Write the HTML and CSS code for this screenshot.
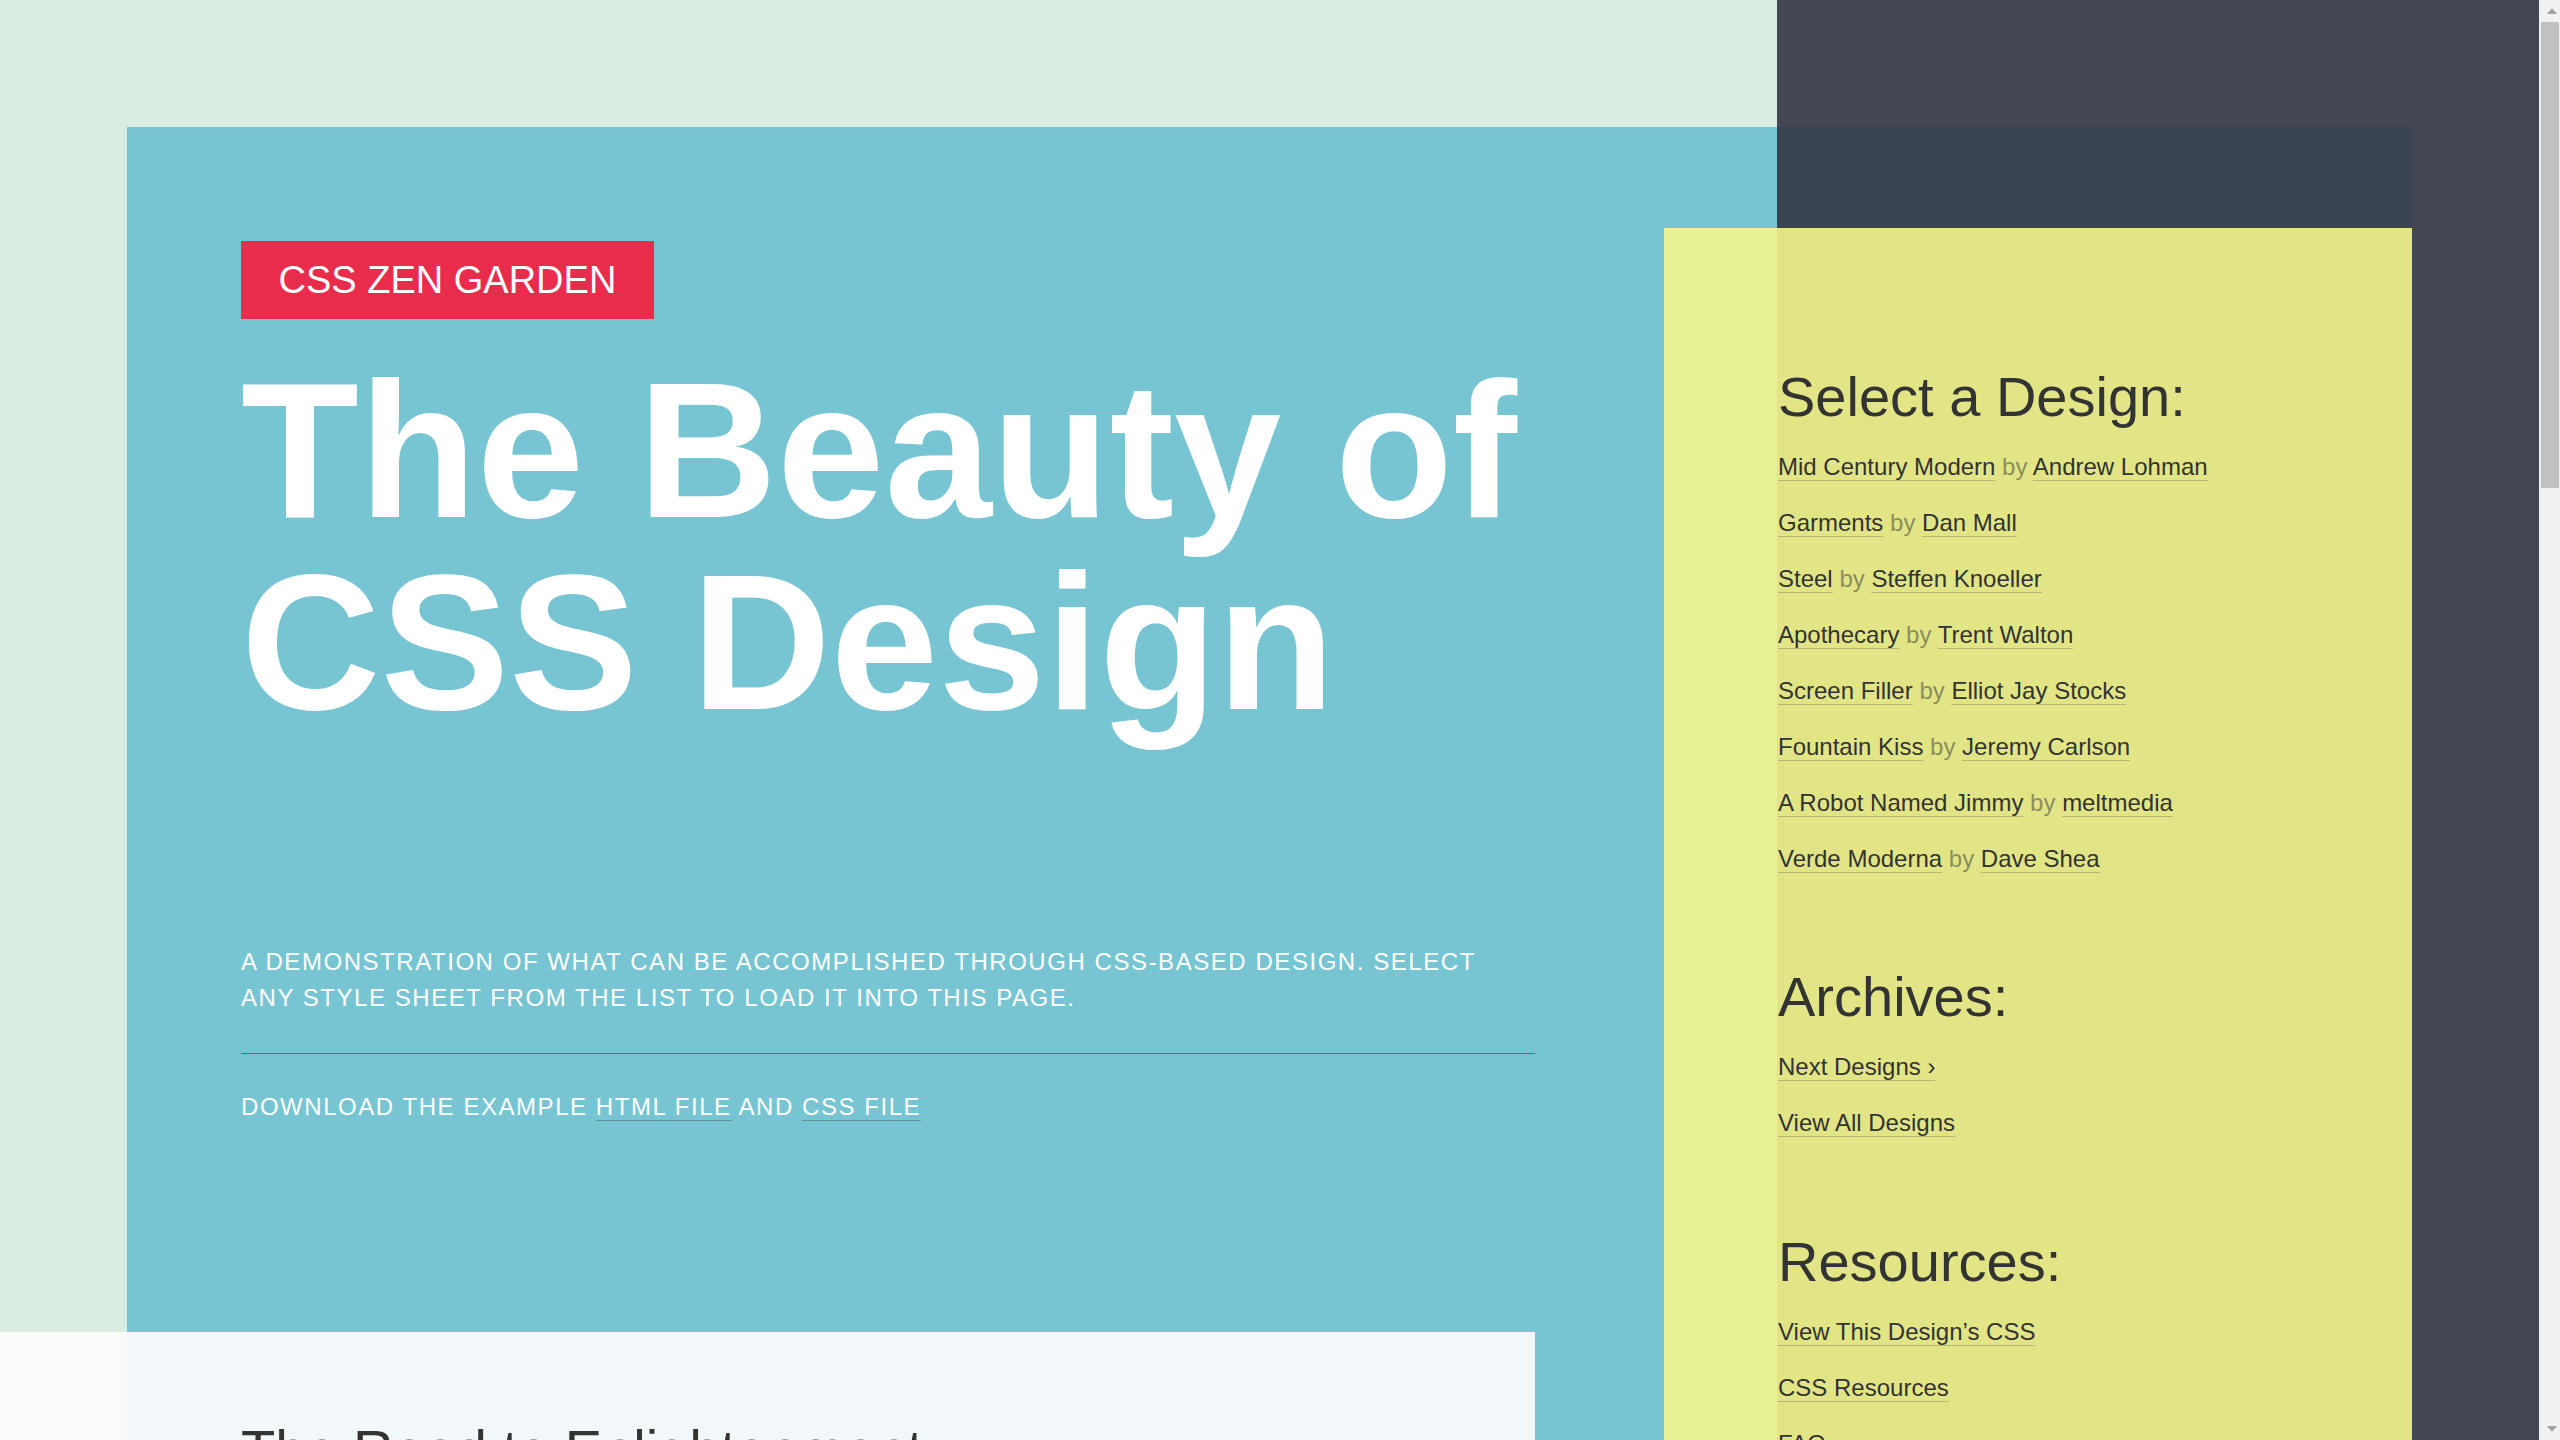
FILE: index.html
```html
<!DOCTYPE html>
<html lang="en">
<head>
<meta charset="utf-8">
<title>CSS Zen Garden: The Beauty of CSS Design</title>
<link rel="stylesheet" href="styles.css">
</head>
<body>
<div class="page-wrapper">
  <div class="main-col">
    <section class="intro">
      <header class="intro-header">
        <h2 class="brand">CSS ZEN GARDEN</h2>
        <h1 class="title">The Beauty of CSS Design</h1>
      </header>
      <p class="summary">A demonstration of what can be accomplished through CSS-based design. Select any style sheet from the list to load it into this page.</p>
      <hr class="divider">
      <p class="preamble">Download the example <a href="#" class="inline-link">html file</a> and <a href="#" class="inline-link">css file</a></p>
    </section>
    <section class="main">
      <div class="block">
        <h3 class="block-title">The Road to Enlightenment</h3>
        <p class="block-text">Littering a dark and dreary road lay the past relics of browser-specific tags, incompatible DOMs, broken CSS support, and abandoned browsers.</p>
        <p class="block-text">We must clear the mind of the past. Web enlightenment has been achieved thanks to the tireless efforts of folk like the W3C, WaSP, and the major browser creators.</p>
        <p class="block-text">The CSS Zen Garden invites you to relax and meditate on the important lessons of the masters. Begin to see with clarity. Learn to use the time-honored techniques in new and invigorating fashion. Become one with the web.</p>
      </div>
      <div class="block">
        <h3 class="block-title">So What is This About?</h3>
        <p class="block-text">There is a continuing need to show the power of CSS. The Zen Garden aims to excite, inspire, and encourage participation. To begin, view some of the existing designs in the list. Clicking on any one will load the style sheet into this very page. The HTML remains the same, the only thing that has changed is the external CSS file. Yes, really.</p>
        <p class="block-text">CSS allows complete and total control over the style of a hypertext document. The only way this can be illustrated in a way that gets people excited is by demonstrating what it can truly be, once the reins are placed in the hands of those able to create beauty from structure. Designers and coders alike have contributed to the beauty of the web; we can always push it further.</p>
      </div>
      <div class="block">
        <h3 class="block-title">Participation</h3>
        <p class="block-text">Strong visual design has always been our focus. You are modifying this page, so strong CSS skills are necessary too, but the example files are commented well enough that even CSS novices can use them as starting points. Please see the CSS Resource Guide for advanced tutorials and tips on working with CSS.</p>
        <p class="block-text">You may modify the style sheet in any way you wish, but not the HTML. This may seem daunting at first if you&rsquo;ve never worked this way before, but follow the listed links to learn more, and use the sample files as a guide.</p>
        <p class="block-text">Download the sample HTML and CSS to work on a copy locally. Once you have completed your masterpiece (and please, don&rsquo;t submit half-finished work) upload your CSS file to a web server under your control. Send us a link to an archive of that file and all associated assets, and if we choose to use it we will download it and place it on our server.</p>
      </div>
      <div class="block">
        <h3 class="block-title">Benefits</h3>
        <p class="block-text">Why participate? For recognition, inspiration, and a resource we can all refer to showing people how amazing CSS really can be. This site serves as equal parts inspiration for those working on the web today, learning tool for those who will be tomorrow, and gallery of future techniques we can all look forward to.</p>
      </div>
      <div class="block">
        <h3 class="block-title">Requirements</h3>
        <p class="block-text">Where possible, we would like to see mostly CSS 1 &amp; 2 usage. CSS 3 &amp; 4 should be limited to widely-supported elements only, or strong fallbacks should be provided. The CSS Zen Garden is about functional, practical CSS and not the latest bleeding-edge tricks viewable by 2% of the browsing public.</p>
        <p class="block-text">This is a learning exercise as well as a demonstration. You retain full copyright on your graphics (with limited exceptions, see submission guidelines), but we ask you release your CSS under a Creative Commons license identical to the one on this site so that others may learn from your work.</p>
      </div>
    </section>
  </div>
  <aside class="sidebar">
    <nav class="side-section side-section--designs">
      <h3 class="side-title">Select a Design:</h3>
      <ul class="side-list">
        <li class="side-item"><a href="#" class="side-link">Mid Century Modern</a> <span class="by">by</span> <a href="#" class="side-link">Andrew Lohman</a></li>
        <li class="side-item"><a href="#" class="side-link">Garments</a> <span class="by">by</span> <a href="#" class="side-link">Dan Mall</a></li>
        <li class="side-item"><a href="#" class="side-link">Steel</a> <span class="by">by</span> <a href="#" class="side-link">Steffen Knoeller</a></li>
        <li class="side-item"><a href="#" class="side-link">Apothecary</a> <span class="by">by</span> <a href="#" class="side-link">Trent Walton</a></li>
        <li class="side-item"><a href="#" class="side-link">Screen Filler</a> <span class="by">by</span> <a href="#" class="side-link">Elliot Jay Stocks</a></li>
        <li class="side-item"><a href="#" class="side-link">Fountain Kiss</a> <span class="by">by</span> <a href="#" class="side-link">Jeremy Carlson</a></li>
        <li class="side-item"><a href="#" class="side-link">A Robot Named Jimmy</a> <span class="by">by</span> <a href="#" class="side-link">meltmedia</a></li>
        <li class="side-item"><a href="#" class="side-link">Verde Moderna</a> <span class="by">by</span> <a href="#" class="side-link">Dave Shea</a></li>
      </ul>
    </nav>
    <nav class="side-section side-section--archives">
      <h3 class="side-title">Archives:</h3>
      <ul class="side-list">
        <li class="side-item"><a href="#" class="side-link">Next Designs &rsaquo;</a></li>
        <li class="side-item"><a href="#" class="side-link">View All Designs</a></li>
      </ul>
    </nav>
    <nav class="side-section side-section--resources">
      <h3 class="side-title">Resources:</h3>
      <ul class="side-list">
        <li class="side-item"><a href="#" class="side-link">View This Design&rsquo;s CSS</a></li>
        <li class="side-item"><a href="#" class="side-link">CSS Resources</a></li>
        <li class="side-item"><a href="#" class="side-link">FAQ</a></li>
        <li class="side-item"><a href="#" class="side-link">Submit a Design</a></li>
        <li class="side-item"><a href="#" class="side-link">Translations</a></li>
      </ul>
    </nav>
  </aside>
</div>
<div class="scrollbar" aria-hidden="true">
  <span class="sb-arrow sb-arrow--up"></span>
  <span class="sb-thumb"></span>
  <span class="sb-arrow sb-arrow--down"></span>
</div>
</body>
</html>
```

FILE: styles.css
```css
html {
  scrollbar-width: none;
  background: linear-gradient(to right, #d9ede3 1777px, #434754 1777px);
}

body {
  margin: 0;
  padding: 127px;
  font-family: "Liberation Sans", Arial, sans-serif;
  color: #333333;
}

/* ---------- fake window scrollbar (overlays the right edge) ---------- */
.scrollbar {
  position: fixed;
  top: 0;
  right: 0;
  width: 21px;
  height: 100vh;
  background: #f1f1f1;
  display: flex;
  flex-direction: column;
  align-items: stretch;
}

.sb-arrow {
  flex: none;
  align-self: center;
  width: 0;
  height: 0;
  border-left: 5px solid transparent;
  border-right: 5px solid transparent;
}

.sb-arrow--up {
  margin: 8px 0 8px 4px;
  border-bottom: 6px solid #a3a3a3;
}

.sb-arrow--down {
  margin: auto 0 8px 4px;
  border-top: 6px solid #a3a3a3;
}

.sb-thumb {
  flex: none;
  height: 466px;
  margin: 0 1px 0 2px;
  background: #c1c1c1;
}

/* ---------- page ---------- */
.page-wrapper {
  width: 2285px;
  display: grid;
  grid-template-columns: 1408px 748px;
  column-gap: 129px;
  background: linear-gradient(to right, #77c5d2 1650px, #3a4453 1650px);
}

/* ---------- intro ---------- */
.intro {
  padding: 114px 0 207px 114px;
  color: #ffffff;
}

.intro-header {
  display: flex;
  flex-direction: column;
  align-items: flex-start;
}

.brand {
  margin: 0;
  padding: 0 37.5px;
  background: #e92c4b;
  color: #ffffff;
  font-size: 38px;
  font-weight: 400;
  line-height: 78px;
}

.title {
  margin: 35px 0 0;
  font-size: 193px;
  line-height: 192px;
  font-weight: 700;
  color: #ffffff;
}

.summary,
.preamble {
  font-size: 24px;
  line-height: 36px;
  letter-spacing: 1.55px;
  text-transform: uppercase;
}

.summary {
  margin: 206px 0 0;
  max-width: 1268px;
}

.divider {
  height: 0;
  margin: 37px 0 35px;
  border: 0;
  border-top: 1px solid #e92c4b;
}

.preamble {
  margin: 0;
}

.inline-link {
  color: #ffffff;
  text-decoration: none;
  border-bottom: 1px solid rgba(51, 51, 51, 0.35);
}

/* ---------- main text ---------- */
.main {
  box-sizing: border-box;
  min-height: 2856px;
  margin-left: -127px;
  padding: 90px 114px 120px 241px;
  background: linear-gradient(to right, #fafcfb 127px, #f2f8fa 127px);
}

.block {
  margin-bottom: 72px;
}

.block-title {
  margin: 0 0 24px;
  font-size: 56px;
  line-height: 56px;
  font-weight: 400;
  color: #333333;
}

.block-text {
  margin: 0 0 24px;
  font-size: 24px;
  line-height: 36px;
}

/* ---------- sidebar ---------- */
.sidebar {
  margin-top: 101px;
  padding: 141px 114px 100px 114px;
  background: linear-gradient(to right, #e8f196 113px, #e1e586 113px);
}

.side-section--designs {
  margin-bottom: 92px;
}

.side-section--archives {
  margin-bottom: 93px;
}

.side-title {
  margin: 0 0 24px;
  font-size: 56px;
  line-height: 56px;
  font-weight: 400;
  color: #333333;
}

.side-list {
  margin: 0;
  padding: 0;
  list-style: none;
}

.side-item {
  margin: 0 0 20px;
  font-size: 24px;
  line-height: 36px;
}

.side-link {
  color: #333333;
  text-decoration: none;
  border-bottom: 1px solid rgba(51, 51, 51, 0.25);
}

.by {
  color: rgba(51, 51, 51, 0.5);
}
```
